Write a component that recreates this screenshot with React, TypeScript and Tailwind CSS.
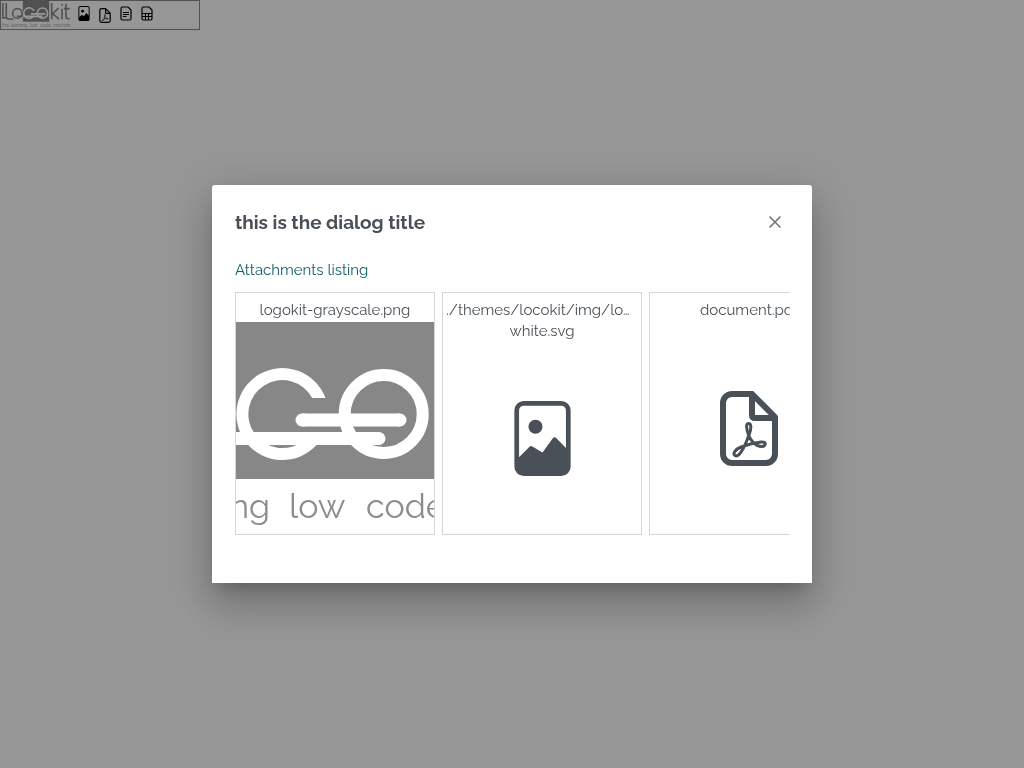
import type { ReactNode } from "react";
import { BsFileImage } from "react-icons/bs";

function Logo({ className, crop = false }: { className: string; crop?: boolean }) {
  return (
    <svg
      viewBox="0 0 530 212"
      preserveAspectRatio={crop ? "xMidYMid slice" : "xMidYMid meet"}
      className={className}
      role="img"
      aria-label="logokit"
      fill="none"
    >
      <g stroke="#878787" strokeWidth="12">
        <path d="M14 16V128H34M40 16V120Q40 136 56 136H96" />
        <circle cx="124" cy="94" r="36" />
        <path d="M120 116H166M384 16V138M436 54L390 96L440 138M462 58V138M462 22V36M492 20V118Q492 134 508 134H520M476 58H520" />
      </g>
      <rect x="165" width="200" height="157" fill="#878787" />
      <path
        fill="#fff"
        d="M255.500 76A46 46 0 1 0 246.500 123L234.400 118A34 34 0 1 1 242.300 76Z"
      />
      <g stroke="#fff" strokeWidth="12">
        <circle cx="313.700" cy="92" r="39" />
        <path d="M166 116.500H309M233 98H330" strokeWidth="13" />
        <path d="M308 116.500H309M232 98H234M329 98H330" strokeWidth="13" strokeLinecap="round" />
      </g>
      <g fill="#8c8c8c" fontSize="34" className="font-[Raleway,Lato,sans-serif]">
        <text x="8" y="196">the</text>
        <text x="200" y="196" textAnchor="end">learning</text>
        <text x="219" y="196">low</text>
        <text x="296" y="196">code</text>
        <text x="393" y="196">machine</text>
      </g>
    </svg>
  );
}

function PdfIcon({ className }: { className: string }) {
  return (
    <svg viewBox="0 0 58 75" fill="none" stroke="currentColor" className={className} aria-hidden="true">
      <path
        strokeWidth="6"
        strokeLinejoin="round"
        d="M32 3H12A9 9 0 0 0 3 12V63A9 9 0 0 0 12 72H46A9 9 0 0 0 55 63V26L32 3V24Q32 27 35 27H55"
      />
      <path
        strokeWidth="3"
        strokeLinejoin="round"
        d="M15 64.500C12 62.500 16 58 21 56C28 53.500 37 51.500 41 51C46.500 50.500 46.500 55 42 55.500C36 56 30.500 49.500 28.500 44C26.500 38 25.500 32.500 28.500 32.500C31.500 32.500 31.500 38 29 44C26.500 51 20 67.500 15 64.500Z"
      />
    </svg>
  );
}

function TextIcon() {
  return (
    <svg viewBox="0 0 12 15" fill="none" stroke="currentColor" className="h-[15px] w-3" aria-hidden="true">
      <path strokeWidth="1.200" d="M8 1H2.500Q1 1 1 2.500V12.500Q1 14 2.500 14H9.500Q11 14 11 12.500V4L8 1Z" />
      <path d="M3 6.500H9M3 8.500H9M3 10.500H6.500" />
    </svg>
  );
}

function SheetIcon() {
  return (
    <svg viewBox="0 0 12 15" fill="none" stroke="currentColor" className="h-[15px] w-3" aria-hidden="true">
      <path strokeWidth="1.200" d="M8 1H2.500Q1 1 1 2.500V12.500Q1 14 2.500 14H9.500Q11 14 11 12.500V4L8 1Z" />
      <path d="M1 7.500H11M1 10.500H11M4.500 7.500V14M7.500 7.500V14" />
    </svg>
  );
}

function Attachment({ name, children }: { name: ReactNode; children: ReactNode }) {
  return (
    <li className="flex w-[200px] shrink-0 flex-col border border-[#d5d6d8] pt-[7px] text-center">
      <div className="px-[3px] pb-px text-[15px] leading-[21px]">{name}</div>
      <div className="flex min-h-0 flex-1 items-center justify-center">{children}</div>
    </li>
  );
}

export default function App() {
  return (
    <div className="min-h-screen bg-[#fafafa] font-[Raleway,Lato,sans-serif] text-[#495057]">
      <div className="flex h-[30px] w-[200px] items-start border border-[#888] text-black">
        <Logo className="h-7 w-[70px]" />
        <div className="flex gap-[9px] pt-[5px] pl-[7px]">
          <BsFileImage className="h-[15px] w-3" viewBox="2 0 12 16" />
          <PdfIcon className="mt-0.5 h-[15px] w-3" />
          <TextIcon />
          <SheetIcon />
        </div>
      </div>

      <div className="fixed inset-0 flex items-center justify-center bg-black/40">
        <section
          role="dialog"
          aria-modal="true"
          aria-labelledby="dialog-title"
          className="w-[600px] max-w-full rounded-t-[3px] bg-white pr-[22px] pb-12 pl-[23px] shadow-[0_11px_15px_-7px_rgba(0,0,0,0.2),0_24px_38px_3px_rgba(0,0,0,0.14),0_9px_46px_8px_rgba(0,0,0,0.12)]"
        >
          <header className="flex items-center justify-between pt-[22px] pb-[22px]">
            <h1 id="dialog-title" className="text-[19px] leading-[30px] font-bold">
              this is the dialog title
            </h1>
            <button type="button" aria-label="Close" className="flex size-[30px] items-center justify-center text-[#6c757d]">
              <svg viewBox="0 0 14 14" className="size-3.5" stroke="currentColor" strokeWidth="1.600" aria-hidden="true">
                <path d="M1.500 1.500L12.500 12.500M12.500 1.500L1.500 12.500" />
              </svg>
            </button>
          </header>
          <h2 className="text-[15px] leading-[22px] text-[#0f5f68]">Attachments listing</h2>
          <ul className="mt-[11px] flex h-[243px] gap-[7px] overflow-hidden">
            <Attachment name="logokit-grayscale.png">
              <Logo crop className="h-full w-full" />
            </Attachment>
            <Attachment
              name={
                <>
                  <span className="block truncate text-left">./themes/locokit/img/lo…</span>
                  <span className="block">white.svg</span>
                </>
              }
            >
              <BsFileImage className="size-[75px]" />
            </Attachment>
            <Attachment name="document.pdf">
              <PdfIcon className="h-[75px] w-[58px]" />
            </Attachment>
          </ul>
        </section>
      </div>
    </div>
  );
}
